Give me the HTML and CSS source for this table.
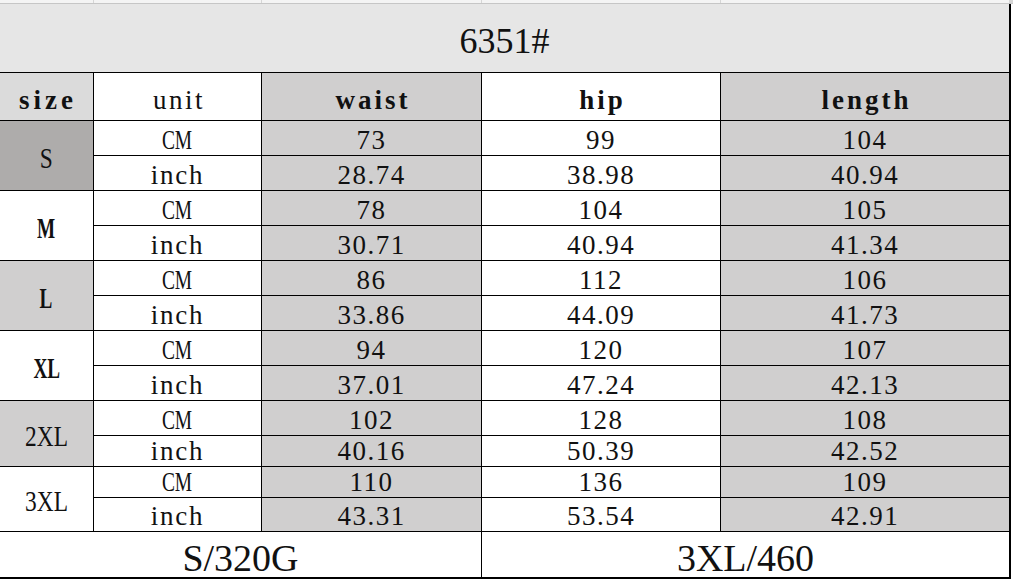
FILE: index.html
```html
<!DOCTYPE html>
<html>
<head>
<meta charset="utf-8">
<link rel="stylesheet" href="styles.css">
</head>
<body>
<div class="strip">
  <span></span><span></span><span></span><span></span><span></span>
</div>
<div class="sheet">
  <div class="cell title">6351#</div>

  <div class="cell hd hd-size">size</div>
  <div class="cell hd hd-unit">unit</div>
  <div class="cell hd gray">waist</div>
  <div class="cell hd">hip</div>
  <div class="cell hd gray">length</div>

  <div class="cell size dark"><span class="lbl">S</span></div>
  <div class="cell data"><span class="cm">CM</span></div>
  <div class="cell data gray">73</div>
  <div class="cell data">99</div>
  <div class="cell data gray">104</div>
  <div class="cell data inch">inch</div>
  <div class="cell data gray">28.74</div>
  <div class="cell data">38.98</div>
  <div class="cell data gray">40.94</div>

  <div class="cell size"><span class="lbl bold">M</span></div>
  <div class="cell data"><span class="cm">CM</span></div>
  <div class="cell data gray">78</div>
  <div class="cell data">104</div>
  <div class="cell data gray">105</div>
  <div class="cell data inch">inch</div>
  <div class="cell data gray">30.71</div>
  <div class="cell data">40.94</div>
  <div class="cell data gray">41.34</div>

  <div class="cell size gray"><span class="lbl bold">L</span></div>
  <div class="cell data"><span class="cm">CM</span></div>
  <div class="cell data gray">86</div>
  <div class="cell data">112</div>
  <div class="cell data gray">106</div>
  <div class="cell data inch">inch</div>
  <div class="cell data gray">33.86</div>
  <div class="cell data">44.09</div>
  <div class="cell data gray">41.73</div>

  <div class="cell size"><span class="lbl bold">XL</span></div>
  <div class="cell data"><span class="cm">CM</span></div>
  <div class="cell data gray">94</div>
  <div class="cell data">120</div>
  <div class="cell data gray">107</div>
  <div class="cell data inch">inch</div>
  <div class="cell data gray">37.01</div>
  <div class="cell data">47.24</div>
  <div class="cell data gray">42.13</div>

  <div class="cell size gray"><span class="lbl">2XL</span></div>
  <div class="cell data"><span class="cm">CM</span></div>
  <div class="cell data gray">102</div>
  <div class="cell data">128</div>
  <div class="cell data gray">108</div>
  <div class="cell data inch">inch</div>
  <div class="cell data gray">40.16</div>
  <div class="cell data">50.39</div>
  <div class="cell data gray">42.52</div>

  <div class="cell size"><span class="lbl">3XL</span></div>
  <div class="cell data"><span class="cm">CM</span></div>
  <div class="cell data gray">110</div>
  <div class="cell data">136</div>
  <div class="cell data gray">109</div>
  <div class="cell data inch">inch</div>
  <div class="cell data gray">43.31</div>
  <div class="cell data">53.54</div>
  <div class="cell data gray">42.91</div>

  <div class="cell foot foot-left">S/320G</div>
  <div class="cell foot foot-right">3XL/460</div>
</div>
</body>
</html>
```

FILE: styles.css
```css
html, body {
  margin: 0;
  padding: 0;
  background: #ffffff;
}

body {
  width: 1013px;
  height: 582px;
  overflow: hidden;
  font-family: "Liberation Serif", "Times New Roman", serif;
  color: #111111;
}

.strip {
  display: grid;
  grid-template-columns: 93px 167px 219px 238px 288px 6px;
  column-gap: 1px;
  height: 3px;
  background: #d6d6d6;
  border-bottom: 1px solid #c6c6c6;
}

.strip span {
  background: #f4f4f4;
}

.sheet {
  display: inline-grid;
  grid-template-columns: 93px 167px 219px 238px 288px;
  grid-template-rows: 68px 47px repeat(9, 34px) 30px 30px 33px 45px;
  gap: 1px;
  background: #000000;
  padding: 0 2px 2px 0;
}

.cell {
  background: #ffffff;
  display: flex;
  justify-content: center;
  align-items: flex-end;
  overflow: visible;
  white-space: nowrap;
}

.gray {
  background: #d0cfcf;
}

.dark {
  background: #aeacab;
}

.title {
  grid-column: 1 / span 5;
  background: #e6e6e6;
  font-size: 36px;
  line-height: 36px;
  align-items: center;
  padding-top: 5px;
  box-sizing: border-box;
}

.hd {
  font-weight: bold;
  font-size: 27px;
  line-height: 27px;
  letter-spacing: 3px;
  padding-bottom: 6px;
  padding-left: 3px;
  box-sizing: border-box;
}

.hd-size {
  background: #dbdbdb;
  letter-spacing: 4px;
}

.hd-unit {
  font-weight: normal;
  letter-spacing: 2.5px;
}

.data {
  font-size: 27px;
  line-height: 27px;
  letter-spacing: 1.5px;
  padding-bottom: 1px;
  box-sizing: border-box;
}

.inch {
  letter-spacing: 1.8px;
}

.cm {
  display: inline-block;
  transform: scaleX(0.72);
  letter-spacing: 0;
}

.size {
  grid-row: span 2;
  align-items: center;
  font-size: 30px;
  line-height: 30px;
  padding-top: 4px;
  box-sizing: border-box;
}

.lbl {
  display: inline-block;
  transform: scaleX(0.78);
}

.lbl.bold {
  font-weight: bold;
  transform: scaleX(0.64);
}

.foot {
  font-size: 38px;
  line-height: 38px;
  align-items: center;
  padding-top: 6px;
  box-sizing: border-box;
}

.foot-left {
  grid-column: 1 / span 3;
}

.foot-right {
  grid-column: 4 / span 2;
}
```
